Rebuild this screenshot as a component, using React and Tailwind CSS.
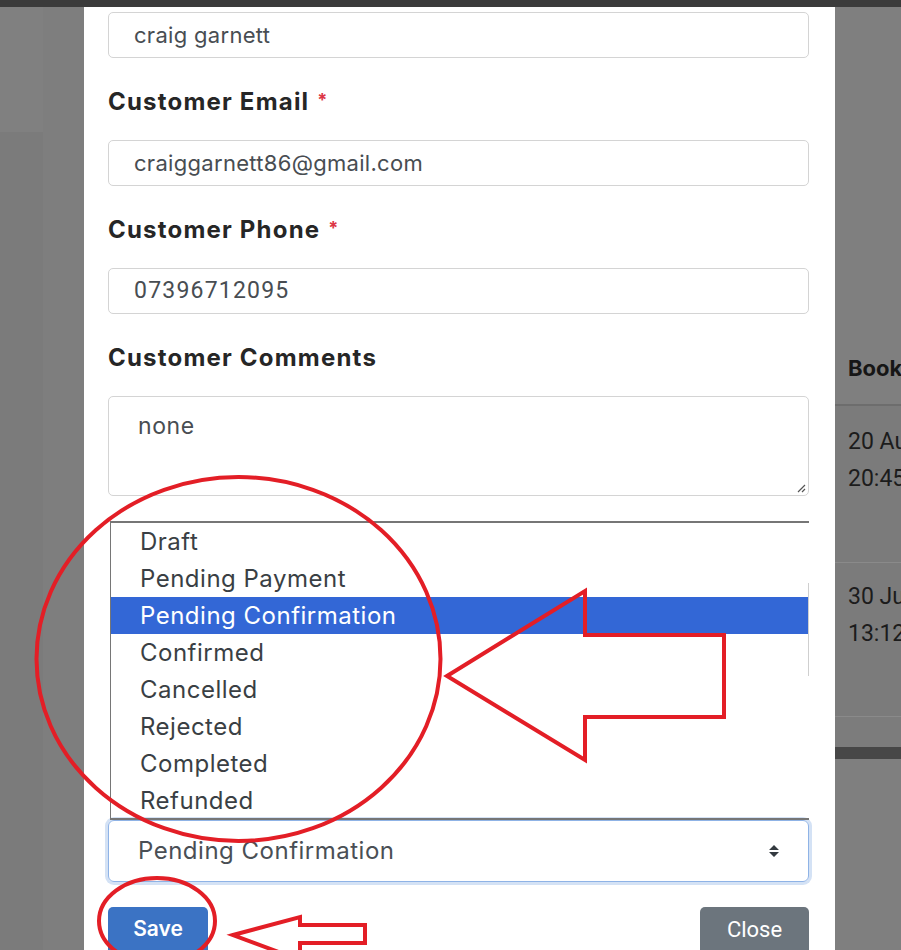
import React from 'react';

const STATUSES = [
  'Draft',
  'Pending Payment',
  'Pending Confirmation',
  'Confirmed',
  'Cancelled',
  'Rejected',
  'Completed',
  'Refunded',
];

const Label = ({ children, required }) => (
  <div className="shrink-0 mt-[28px] mb-[22px] h-[32px] flex items-center text-[24px] tracking-[1.2px] font-bold text-[#262626] leading-none">
    {children}
    {required && <span className="ml-[8px] text-[#dc3545] text-[18px] self-start mt-[5px]">*</span>}
  </div>
);

const Field = ({ value, mono }) => (
  <div className="shrink-0 h-[46px] rounded-[5px] border border-[#d4d4d4] flex items-center pl-[25px]">
    <span
      className={
        mono
          ? 'text-[23px] text-[#484d52] font-[Roboto,sans-serif] tracking-[1.2px]'
          : 'text-[22px] text-[#484d52] tracking-[0.3px]'
      }
    >
      {value}
    </span>
  </div>
);

const Annotations = () => (
  <svg className="absolute inset-0 pointer-events-none" width="901" height="950" viewBox="0 0 901 950">
    <g fill="none" stroke="#e31e26" strokeWidth="4" strokeLinejoin="miter">
      <ellipse cx="238.5" cy="659" rx="202" ry="182" />
      <ellipse cx="157" cy="921" rx="58" ry="43" />
      <polygon points="447,676 585,591 585,635 724,635 724,717 585,717 585,760" />
      <polygon points="233,935 300,917 300,925 365,925 365,943 300,943 300,960" />
    </g>
  </svg>
);

export default function App() {
  return (
    <div className="relative w-[901px] h-[950px] overflow-hidden bg-[#7f7f7f] font-[Inter,'Open_Sans',sans-serif]">
      <div className="h-[7px] bg-[#3b3b3b]" />
      <div className="flex h-[943px]">
        {/* left backdrop */}
        <div className="w-[84px] flex">
          <div className="w-[43px] flex flex-col">
            <div className="h-[125px] bg-[#808080]" />
            <div className="flex-1 bg-[#7b7b7b]" />
          </div>
          <div className="flex-1 bg-[#7e7e7e]" />
        </div>

        {/* modal */}
        <div className="w-[751px] bg-white pl-[24px] pr-[26px] pt-[5px] flex flex-col overflow-hidden">
          <Field value="craig garnett" />
          <Label required>Customer Email</Label>
          <Field value="craiggarnett86@gmail.com" />
          <Label required>Customer Phone</Label>
          <Field value="07396712095" mono />
          <Label>Customer Comments</Label>
          <div className="shrink-0 relative h-[100px] rounded-[5px] border border-[#d4d4d4] pl-[29px] pt-[12px]">
            <span className="text-[23px] tracking-[0.6px] text-[#484d52]">none</span>
            <svg className="absolute right-[2px] bottom-[2px]" width="10" height="10" viewBox="0 0 10 10">
              <path d="M9 2 L2 9 M9 6 L6 9" stroke="#555" strokeWidth="1.2" />
            </svg>
          </div>

          {/* open native list */}
          <div className="shrink-0 relative mt-[25px] ml-[2px] h-[299px] border-t-2 border-l border-b-2 border-[#767676] flex flex-col">
            {STATUSES.map((s) => (
              <div
                key={s}
                className={`shrink-0 h-[37px] flex items-center pl-[29px] text-[24px] tracking-[0.5px] ${
                  s === 'Pending Confirmation' ? 'bg-[#3367d6] text-white' : 'text-[#3a3f44]'
                }`}
              >
                {s}
              </div>
            ))}
            <div className="absolute right-0 top-[60px] h-[93px] w-px bg-[#cfcfcf]" />
          </div>

          {/* select */}
          <div className="shrink-0 h-[62px] rounded-[6px] border border-[#8fb3e6] shadow-[0_0_0_3px_#d4e2f5] flex items-center justify-between pl-[29px] pr-[28px]">
            <span className="text-[24px] tracking-[0.5px] text-[#4a4f55]">Pending Confirmation</span>
            <svg width="12" height="16" viewBox="0 0 12 16">
              <path d="M6 2 L11 7 H1 Z M6 14 L11 9 H1 Z" fill="#343a40" />
            </svg>
          </div>

          <div className="shrink-0 mt-[25px] flex justify-between">
            <button className="w-[100px] h-[48px] rounded-[5px] bg-[#3b73c4] text-white text-[21px] font-semibold pb-[4px]">
              Save
            </button>
            <button className="w-[109px] h-[48px] rounded-[5px] bg-[#6c757d] text-white text-[22px] font-[Roboto,sans-serif] pb-[4px]">
              Close
            </button>
          </div>
        </div>

        {/* right backdrop table */}
        <div className="flex-1 overflow-hidden flex flex-col bg-[#7f7f7f]">
          <div className="shrink-0 h-[326px]" />
          <div className="shrink-0 h-[71px] flex items-center pl-[13px] text-[22px] font-bold text-[#161616] whitespace-nowrap">
            Booking
          </div>
          <div className="shrink-0 h-[2px] bg-[#6d6d6d]" />
          <div className="shrink-0 h-[156px] pl-[13px] pt-[22px] bg-[#7b7b7b] flex flex-col gap-[9px] text-[23px] text-[#1c1c1c] font-[Roboto,sans-serif] whitespace-nowrap leading-[28px]">
            <span>20 Aug</span>
            <span>20:45</span>
          </div>
          <div className="shrink-0 h-px bg-[#8a8a8a]" />
          <div className="shrink-0 h-[153px] pl-[13px] pt-[20px] bg-[#7b7b7b] flex flex-col gap-[9px] text-[23px] text-[#1c1c1c] font-[Roboto,sans-serif] whitespace-nowrap leading-[28px]">
            <span>30 Jul</span>
            <span>13:12</span>
          </div>
          <div className="shrink-0 h-px bg-[#8a8a8a]" />
          <div className="shrink-0 h-[30px] bg-[#7c7c7c]" />
          <div className="shrink-0 h-[12px] bg-[#474747]" />
          <div className="flex-1 bg-[#7f7f7f]" />
        </div>
      </div>
      <Annotations />
    </div>
  );
}
